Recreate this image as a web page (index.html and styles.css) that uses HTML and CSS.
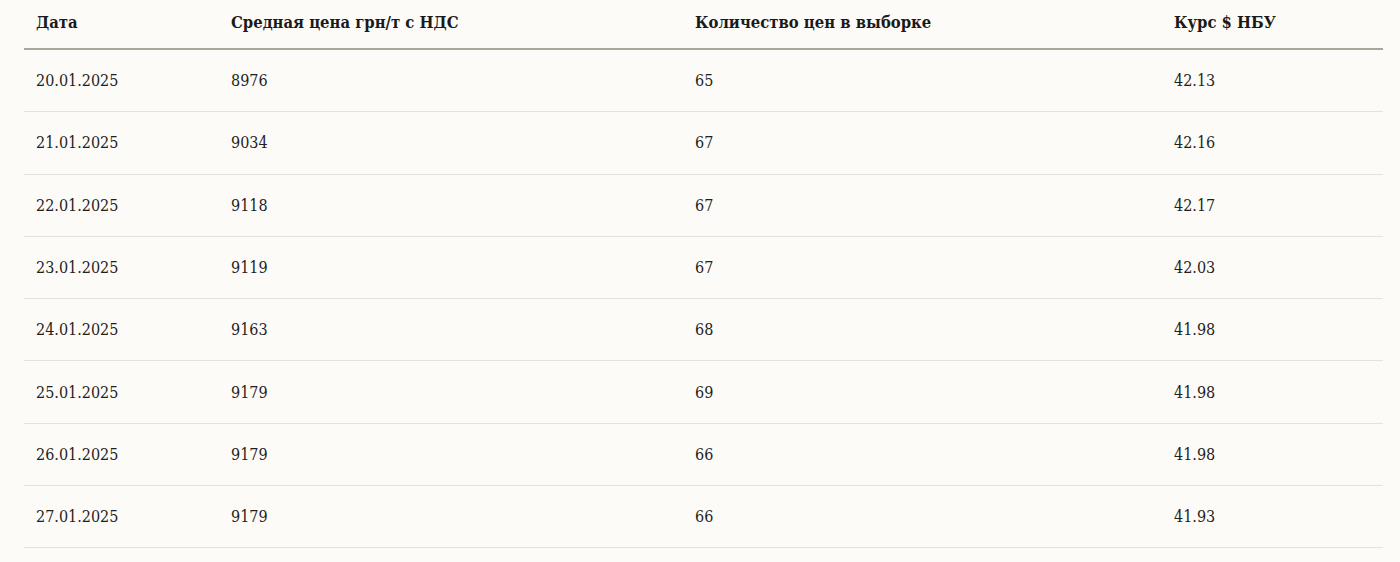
FILE: index.html
```html
<!DOCTYPE html>
<html lang="ru">
<head>
<meta charset="utf-8">
<title>Цены</title>
<link rel="stylesheet" href="styles.css">
</head>
<body>
<div class="wrap">
<table class="prices">
  <colgroup>
    <col class="c1"><col class="c2"><col class="c3"><col class="c4">
  </colgroup>
  <thead>
    <tr><th>Дата</th><th>Средная цена грн/т с НДС</th><th>Количество цен в выборке</th><th>Курс $ НБУ</th></tr>
  </thead>
  <tbody>
    <tr><td>20.01.2025</td><td>8976</td><td>65</td><td>42.13</td></tr>
    <tr><td>21.01.2025</td><td>9034</td><td>67</td><td>42.16</td></tr>
    <tr><td>22.01.2025</td><td>9118</td><td>67</td><td>42.17</td></tr>
    <tr><td>23.01.2025</td><td>9119</td><td>67</td><td>42.03</td></tr>
    <tr><td>24.01.2025</td><td>9163</td><td>68</td><td>41.98</td></tr>
    <tr><td>25.01.2025</td><td>9179</td><td>69</td><td>41.98</td></tr>
    <tr><td>26.01.2025</td><td>9179</td><td>66</td><td>41.98</td></tr>
    <tr><td>27.01.2025</td><td>9179</td><td>66</td><td>41.93</td></tr>
  </tbody>
</table>
</div>
</body>
</html>
```
FILE: styles.css
```css
html, body {
  margin: 0;
  padding: 0;
  background: #fdfbf8;
}
body {
  font-family: "DejaVu Serif", "Liberation Serif", serif;
  color: #1f1f1f;
}
.wrap {
  padding: 0 17px 0 24px;
}
.prices {
  width: 100%;
  border-collapse: collapse;
  table-layout: fixed;
}
.c1 { width: 195px; }
.c2 { width: 464px; }
.c3 { width: 479px; }
.c4 { width: auto; }
.prices th, .prices td {
  text-align: left;
  padding: 0 12px;
  font-stretch: condensed;
}
.prices th {
  height: 44px;
  font-size: 16.5px;
  font-weight: bold;
  color: #1a1a1a;
  border-bottom: 2px solid #a9a898;
  vertical-align: middle;
  padding-bottom: 4px;
}
.prices td {
  height: 61.3px;
  font-size: 16px;
  border-bottom: 1px solid #e4e2de;
  vertical-align: middle;
}
```
